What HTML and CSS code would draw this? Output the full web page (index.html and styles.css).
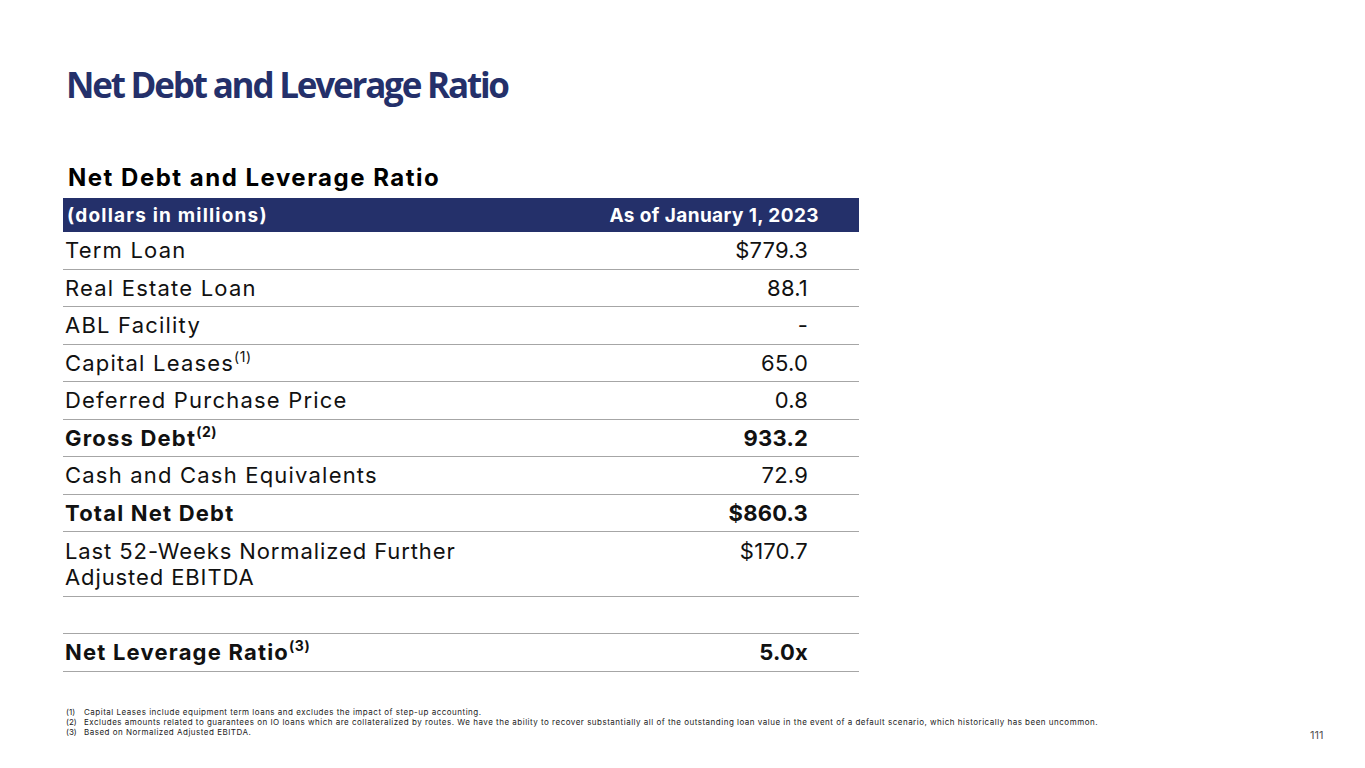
FILE: index.html
```html
<!DOCTYPE html>
<html>
<head>
<meta charset="utf-8">
<link rel="stylesheet" href="styles.css">
</head>
<body>
<div class="slide">
  <h1 class="title">Net Debt and Leverage Ratio</h1>
  <section class="block">
    <h2 class="table-title">Net Debt and Leverage Ratio</h2>
    <div class="table">
      <div class="head"><span class="h-left">(dollars in millions)</span><span class="h-right">As of January 1, 2023</span></div>
      <div class="row"><span>Term Loan</span><span class="val">$779.3</span></div>
      <div class="row"><span>Real Estate Loan</span><span class="val">88.1</span></div>
      <div class="row"><span>ABL Facility</span><span class="val">-</span></div>
      <div class="row"><span>Capital Leases<sup>(1)</sup></span><span class="val">65.0</span></div>
      <div class="row"><span>Deferred Purchase Price</span><span class="val">0.8</span></div>
      <div class="row bold"><span>Gross Debt<sup>(2)</sup></span><span class="val">933.2</span></div>
      <div class="row"><span>Cash and Cash Equivalents</span><span class="val">72.9</span></div>
      <div class="row bold"><span>Total Net Debt</span><span class="val">$860.3</span></div>
      <div class="row tall"><span class="wrap">Last 52-Weeks Normalized Further Adjusted EBITDA</span><span class="val">$170.7</span></div>
      <div class="row empty"><span></span></div>
      <div class="row bold"><span>Net Leverage Ratio<sup>(3)</sup></span><span class="val">5.0x</span></div>
    </div>
  </section>
  <footer class="notes">
    <div class="note"><span class="n">(1)</span><span>Capital Leases include equipment term loans and excludes the impact of step-up accounting.</span></div>
    <div class="note"><span class="n">(2)</span><span>Excludes amounts related to guarantees on IO loans which are collateralized by routes. We have the ability to recover substantially all of the outstanding loan value in the event of a default scenario, which historically has been uncommon.</span></div>
    <div class="note"><span class="n">(3)</span><span>Based on Normalized Adjusted EBITDA.</span></div>
  </footer>
  <div class="page">111</div>
</div>
</body>
</html>
```
FILE: styles.css
```css
* { box-sizing: border-box; }
html, body { margin: 0; padding: 0; background: #fff; }
.slide {
  position: relative;
  width: 1365px;
  height: 768px;
  overflow: hidden;
  font-family: "Inter", "Noto Sans", sans-serif;
  color: #111;
}
.title {
  margin: 0;
  padding: 63px 0 0 66px;
  font-family: "Open Sans", sans-serif;
  font-weight: 700;
  font-size: 35px;
  line-height: 44px;
  letter-spacing: -2.2px;
  color: #24306a;
}
.block {
  margin: 56px 0 0 63px;
  width: 796px;
}
.table-title {
  margin: 0 0 5px 5px;
  font-size: 24px;
  line-height: 30px;
  font-weight: 700;
  letter-spacing: 1.5px;
  color: #000;
}
.table { display: flex; flex-direction: column; }
.head {
  display: flex;
  justify-content: space-between;
  align-items: center;
  height: 34px;
  background: #24306a;
  color: #fff;
  font-weight: 700;
  font-size: 19px;
  padding: 0 40px 0 4px;
}
.h-left { letter-spacing: 1.2px; }
.h-right { letter-spacing: 0.4px; }
.row {
  display: flex;
  justify-content: space-between;
  align-items: center;
  height: 37.5px;
  border-bottom: 1.5px solid #a6a6a6;
  font-size: 22px;
  letter-spacing: 1.2px;
  padding: 0 51px 0 2px;
}
.row .val { text-align: right; letter-spacing: 0.2px; }
.row.bold { font-weight: 700; }
.row sup { font-size: 14px; line-height: 0; vertical-align: 9px; font-weight: inherit; letter-spacing: 0.5px; }
.row.tall { height: 65px; align-items: flex-start; padding-top: 6px; }
.row.tall .wrap { width: 420px; line-height: 26px; letter-spacing: 0.9px; }
.row.tall .val { line-height: 26px; }
.row.empty { height: 37px; }
.notes {
  position: absolute;
  left: 66px;
  top: 707px;
  font-size: 8px;
  letter-spacing: 0.5px;
  line-height: 10px;
  color: #222;
}
.note { display: flex; }
.note .n { width: 18px; letter-spacing: 0; }
.page {
  position: absolute;
  left: 1310px;
  top: 728px;
  font-size: 11px;
  color: #555;
}
```
